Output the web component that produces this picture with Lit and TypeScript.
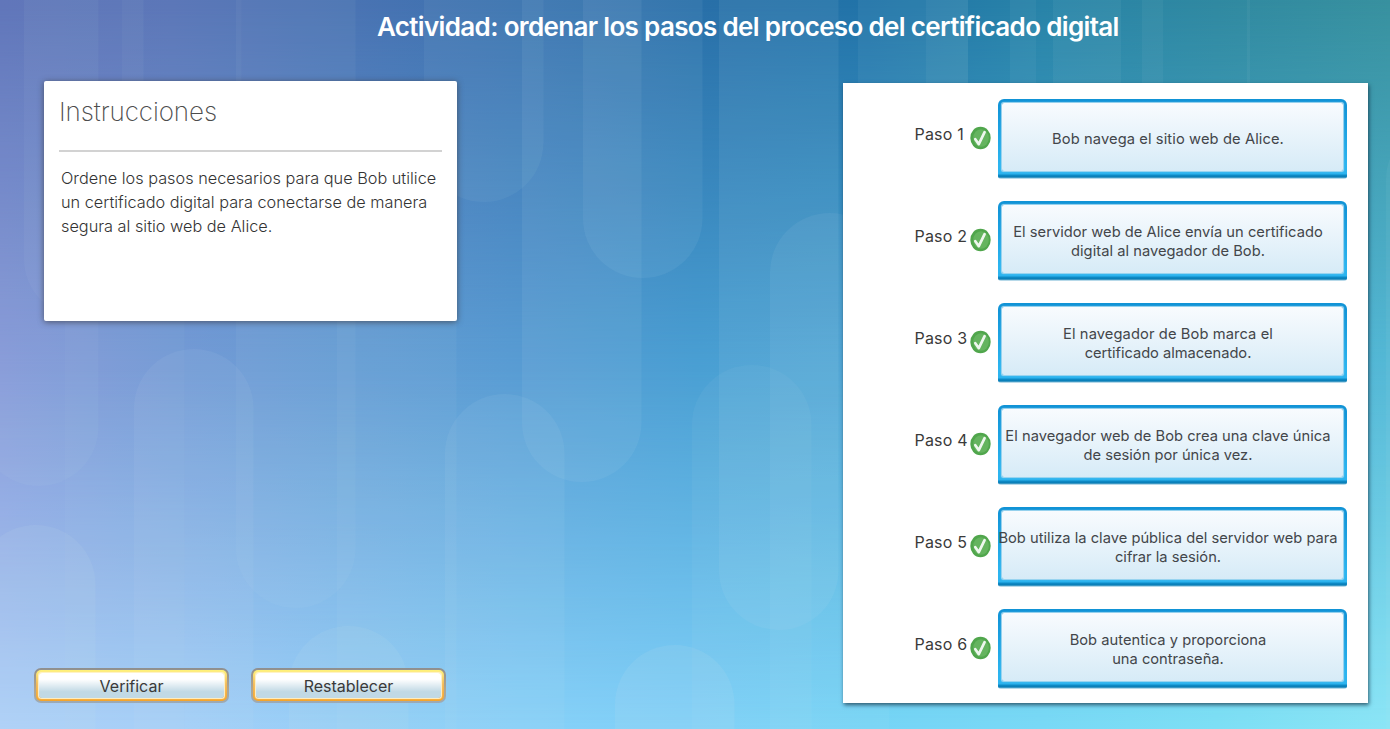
import { LitElement, html, css, svg } from "lit";
import { customElement, property } from "lit/decorators.js";

// Rounded columns of the backdrop: x, top, bottom, opacity
const PILLS: [number, number, number, number][] = [
  [24, -80, 318, 0.05], [-21, -80, 486, 0.055], [122, -80, 300, 0.04],
  [65, 250, 900, 0.04], [134, 349, 900, 0.07], [236, -80, 608, 0.05],
  [337, 200, 900, 0.05], [424, -80, 202, 0.06], [583, -80, 278, 0.075],
  [522, -80, 482, 0.08], [445, 394, 900, 0.08], [719, -80, 630, 0.08],
  [692, 365, 900, 0.05], [770, 213, 900, 0.07], [615, 645, 900, 0.11],
  [289, 626, 900, 0.09], [-24, 525, 900, 0.09],
  [1386, 120, 900, 0.06],
];
const BANDS: [number, number, number][] = [
  [858, 110, 0.06], [926, 42, 0.05], [1010, 26, 0.05], [1053, 68, 0.06], [1142, 21, 0.05], [1247, 3, 0.05],
];
const TOP = ["#5b70b8", "#5873b7", "#4a73b3", "#3a72af", "#296fa8", "#2173a8", "#2883a8", "#3089a1", "#38919f"];
const MID = ["#8799d8", "#749bd6", "#669dd4", "#589cd3", "#4a9fd3", "#4ba5d4", "#4caed2", "#50b2d3", "#54b8d6"];
const LOW = ["#add0f9", "#a5d0f8", "#96cff7", "#88d1f8", "#7fd0f8", "#76d5f6", "#79d9f6", "#7ddff5", "#8ce5f6"];

@customElement("activity-backdrop")
class ActivityBackdrop extends LitElement {
  static styles = css`
    :host { display: block; }
    svg { display: block; width: 100%; height: 100%; }
    .fade { mask-type: alpha; }
  `;
  private ramp(id: string, colors: string[]) {
    return svg`<linearGradient id=${id} x1="0" x2="1" y1="0" y2="0">
      ${colors.map((c, i) => svg`<stop offset=${i / (colors.length - 1)} stop-color=${c}></stop>`)}
    </linearGradient>`;
  }
  render() {
    return html`<svg viewBox="0 0 1390 729" preserveAspectRatio="none">
      <defs>
        ${this.ramp("top", TOP)}${this.ramp("mid", MID)}${this.ramp("low", LOW)}
        <linearGradient id="f1" x1="0" x2="0" y1="0" y2="1">
          <stop offset="0" stop-color="#fff" stop-opacity="0"></stop>
          <stop offset=".5" stop-color="#fff"></stop>
        </linearGradient>
        <linearGradient id="f2" x1="0" x2="0" y1="0" y2="1">
          <stop offset=".5" stop-color="#fff" stop-opacity="0"></stop>
          <stop offset="1" stop-color="#fff"></stop>
        </linearGradient>
        <mask id="m1" class="fade"><rect width="1390" height="729" fill="url(#f1)"></rect></mask>
        <mask id="m2" class="fade"><rect width="1390" height="729" fill="url(#f2)"></rect></mask>
      </defs>
      <rect width="1390" height="729" fill="url(#top)"></rect>
      <rect width="1390" height="729" fill="url(#mid)" mask="url(#m1)"></rect>
      <rect width="1390" height="729" fill="url(#low)" mask="url(#m2)"></rect>
      ${PILLS.map(([x, a, b, o]) => svg`<rect x=${x} y=${a} width="119.5" height=${b - a} rx="59.7" fill="#cfe6ee" fill-opacity=${o}></rect>`)}
      ${BANDS.map(([x, w, o]) => svg`<rect x=${x} y="0" width=${w} height="200" fill="#cfe6ee" fill-opacity=${o}></rect>`)}
    </svg>`;
  }
}

@customElement("step-row")
class StepRow extends LitElement {
  @property({ type: Number }) number = 1;
  @property({ attribute: false }) lines: [string, number][] = [];
  static styles = css`
    :host { display: flex; height: 80px; padding-left: 72px; }
    .label { width: 55.5px; padding-top: 25px; font-size: 16px; line-height: 20px; letter-spacing: 0.2px; white-space: nowrap; color: #3a3a3a; font-weight: 370; }
    .check { width: 22px; height: 24px; margin-top: 27px; margin-right: 6px; display: block; }
    .box {
      box-sizing: border-box; width: 349px; height: 80px; border-radius: 6px 6px 3px 3px;
      padding: 4px 4px 8px;
      background: linear-gradient(#1193d6 0, #1295d8 8px, #2cb5f0 66px, #2cb3ee 75px, #0f8cc8 76px, #087cb5 78px, #6fb3d3 79px, #ffffff00 80px);
      display: flex;
    }
    .face {
      flex: 1; min-width: 0; border-radius: 2px; box-shadow: 0 0 1px 0.5px #a5d8f0;
      background: linear-gradient(#f8fbfe, #d6ebf7);
      display: flex; flex-direction: column; align-items: center; justify-content: center; padding-top: 5px;
    }
    .line { font-size: 14.7px; line-height: 19px; margin-right: 9px; white-space: nowrap; color: #43464a; }
  `;
  render() {
    return html`
      <div class="label">Paso ${this.number}</div>
      <svg class="check" viewBox="0 0 22 24">
        <ellipse cx="10.5" cy="12" rx="10.2" ry="11.2" fill="#50a64c"></ellipse>
        <ellipse cx="11" cy="12" rx="7.8" ry="8.8" fill="#65b45f"></ellipse>
        <path d="M5.3 13.2 L8.8 18.2 L14.6 6.2" fill="none" stroke="#eef7ee" stroke-width="2.7" stroke-linecap="round" stroke-linejoin="round"></path>
      </svg>
      <div class="box"><div class="face">
        ${this.lines.map(([t, s]) => html`<div class="line" style="letter-spacing:${s}px">${t}</div>`)}
      </div></div>`;
  }
}

@customElement("app-root")
class AppRoot extends LitElement {
  static styles = css`
    :host {
      display: grid; width: 1390px; height: 729px; overflow: hidden;
      font-family: Inter, "Liberation Sans", sans-serif; color: #333;
    }
    .backdrop, .page { grid-area: 1 / 1; min-width: 0; min-height: 0; }
    .page { z-index: 1; display: grid; grid-template-rows: 81px 648px; }
    .title {
      margin: 0; padding: 10px 0 0 377px; font-size: 26px; line-height: 34px; font-weight: 630;
      letter-spacing: -0.66px; color: #fff; white-space: nowrap;
    }
    .content { display: flex; }
    .left { width: 842.5px; display: flex; flex-direction: column; }
    .card {
      box-sizing: border-box; width: 413px; height: 240px; margin-left: 44px; padding: 11px 15px 0;
      background: #fff; border-radius: 2px; box-shadow: 0 1px 6px rgba(60, 60, 70, 0.75);
    }
    .heading { margin: 0; height: 58px; font-size: 26px; line-height: 40px; font-weight: 150; letter-spacing: -0.08px; border-bottom: 2px solid #d2d2d2; color: #4c4c4c; }
    .text { padding: 14px 0 0 2px; font-size: 16.3px; line-height: 24px; white-space: nowrap; }
    .text div { font-weight: 330; }
    .buttons { display: flex; gap: 22px; padding: 347px 0 0 34px; }
    .button {
      box-sizing: border-box; width: 195px; height: 35px; padding: 2px; border: 0; border-radius: 7px;
      background: linear-gradient(#8f8f8f, #b0a58f 60%, #9caab6); display: flex; font: inherit;
    }
    .rim { flex: 1; border-radius: 5px; padding: 3px; background: linear-gradient(#fff27a, #f3bb59 45%, #f5a52b); display: flex; }
    .cap {
      flex: 1; border-radius: 3px; background: linear-gradient(#fff 25%, #c1d9e5 75%);
      box-shadow: 0 0 1px 0.5px #fff4d0; font-size: 16px; line-height: 27px; color: #3a3a3a; text-align: center;
      font-weight: 370;
    }
    .panel {
      box-sizing: border-box; width: 525px; height: 619.5px; margin-top: 2px; padding-top: 16px;
      display: flex; flex-direction: column; gap: 22px; background: #fff; box-shadow: 1px 2px 4px rgba(20, 50, 70, 0.75);
    }
  `;
  private steps: [string, number][][] = [
    [["Bob navega el sitio web de Alice.", 0.1]],
    [["El servidor web de Alice envía un certificado", 0.02], ["digital al navegador de Bob.", 0.03]],
    [["El navegador de Bob marca el", 0.1], ["certificado almacenado.", -0.04]],
    [["El navegador web de Bob crea una clave única", 0.03], ["de sesión por única vez.", 0]],
    [["Bob utiliza la clave pública del servidor web para", 0.01], ["cifrar la sesión.", 0]],
    [["Bob autentica y proporciona", 0.03], ["una contraseña.", 0]],
  ];
  render() {
    return html`
      <activity-backdrop class="backdrop"></activity-backdrop>
      <div class="page">
        <h1 class="title">Actividad: ordenar los pasos del proceso del certificado digital</h1>
        <div class="content">
          <div class="left">
            <div class="card">
              <h2 class="heading">Instrucciones</h2>
              <div class="text">
                <div>Ordene los pasos necesarios para que Bob utilice</div>
                <div>un certificado digital para conectarse de manera</div>
                <div>segura al sitio web de Alice.</div>
              </div>
            </div>
            <div class="buttons">
              <button class="button"><span class="rim"><span class="cap">Verificar</span></span></button>
              <button class="button"><span class="rim"><span class="cap">Restablecer</span></span></button>
            </div>
          </div>
          <div class="panel">
            ${this.steps.map((lines, i) => html`<step-row .number=${i + 1} .lines=${lines}></step-row>`)}
          </div>
        </div>
      </div>`;
  }
}
